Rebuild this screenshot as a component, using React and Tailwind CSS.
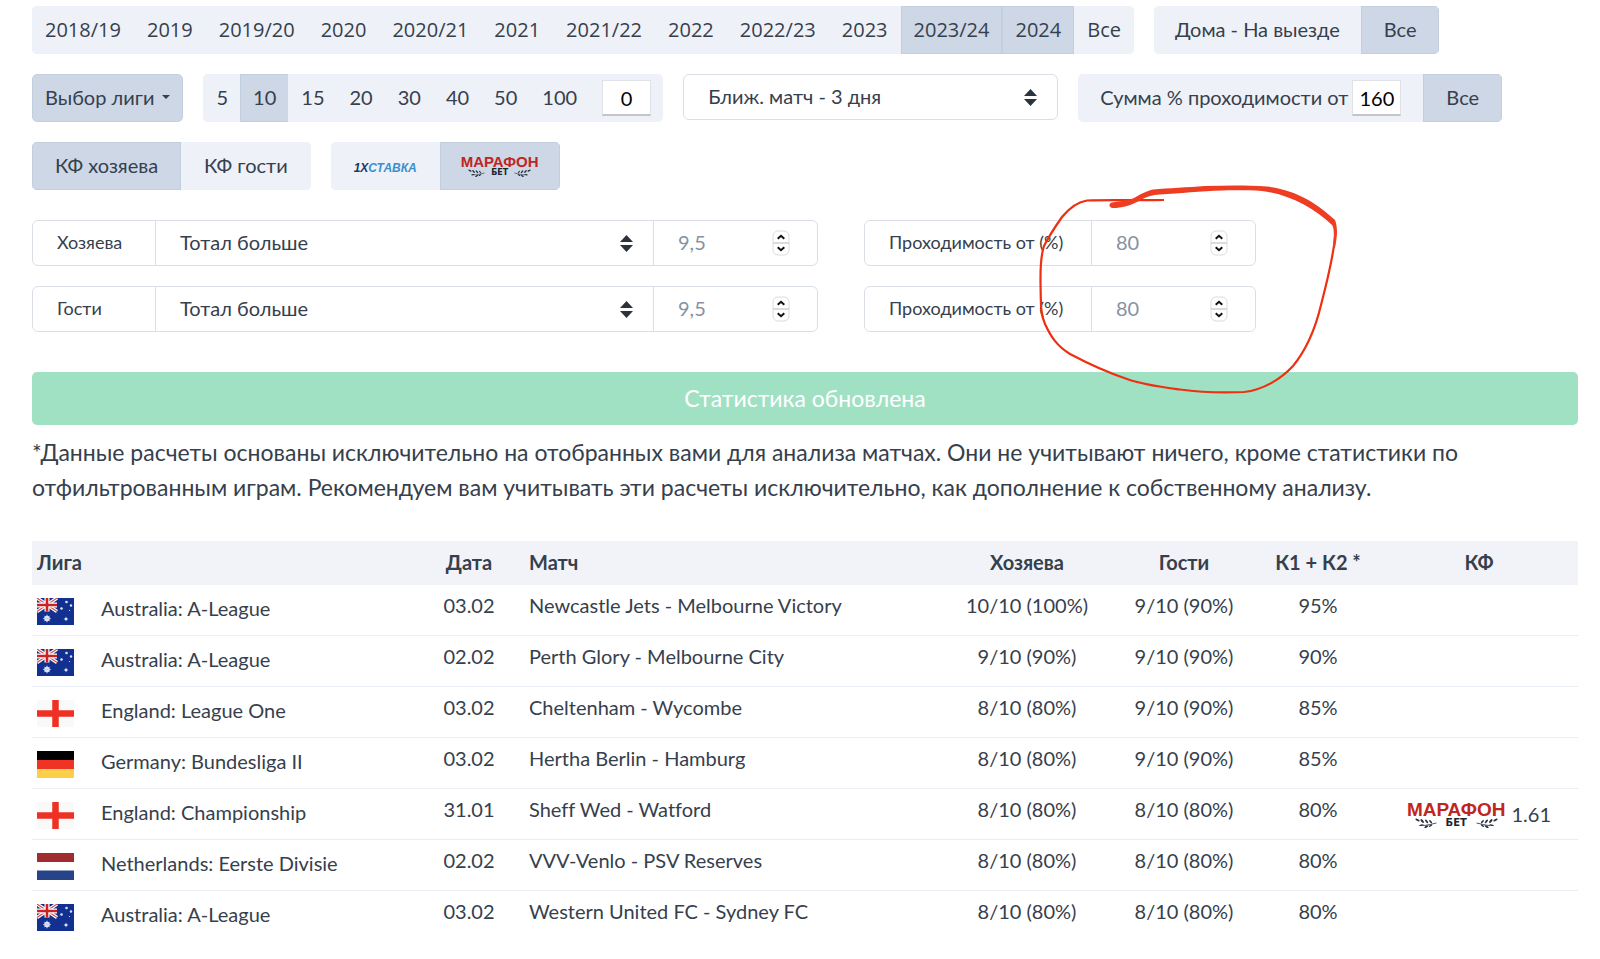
const seasons = [
  '2018/19', '2019', '2019/20', '2020', '2020/21', '2021', '2021/22',
  '2022', '2022/23', '2023', '2023/24', '2024', 'Все',
];
const activeSeasons = ['2023/24', '2024'];
const matchCounts = ['5', '10', '15', '20', '30', '40', '50', '100'];

const matches = [
  { flag: 'au', league: 'Australia: A-League', date: '03.02', match: 'Newcastle Jets - Melbourne Victory', home: '10/10 (100%)', away: '9/10 (90%)', total: '95%' },
  { flag: 'au', league: 'Australia: A-League', date: '02.02', match: 'Perth Glory - Melbourne City', home: '9/10 (90%)', away: '9/10 (90%)', total: '90%' },
  { flag: 'en', league: 'England: League One', date: '03.02', match: 'Cheltenham - Wycombe', home: '8/10 (80%)', away: '9/10 (90%)', total: '85%' },
  { flag: 'de', league: 'Germany: Bundesliga II', date: '03.02', match: 'Hertha Berlin - Hamburg', home: '8/10 (80%)', away: '9/10 (90%)', total: '85%' },
  { flag: 'en', league: 'England: Championship', date: '31.01', match: 'Sheff Wed - Watford', home: '8/10 (80%)', away: '8/10 (80%)', total: '80%', odds: '1.61' },
  { flag: 'nl', league: 'Netherlands: Eerste Divisie', date: '02.02', match: 'VVV-Venlo - PSV Reserves', home: '8/10 (80%)', away: '8/10 (80%)', total: '80%' },
  { flag: 'au', league: 'Australia: A-League', date: '03.02', match: 'Western United FC - Sydney FC', home: '8/10 (80%)', away: '8/10 (80%)', total: '80%' },
];

function FilterButton({ active, className = 'px-3', children }) {
  return (
    <button
      type="button"
      aria-pressed={active}
      className={`flex h-12 items-center justify-center border ${
        active ? 'border-[#c3cfdf] bg-[#cdd7e6]' : 'border-[#eef1f7] bg-[#eef1f7]'
      } ${className}`}
    >
      {children}
    </button>
  );
}

function Group({ children, className = '' }) {
  return <div className={`flex overflow-hidden rounded-[5px] bg-[#eef1f7] ${className}`}>{children}</div>;
}

function SmallInput({ id, label, value }) {
  return (
    <input
      id={id}
      aria-label={label}
      defaultValue={value}
      className="h-9 w-[49px] border border-b-2 border-[#dfe3e8] border-b-[#c2c6cb] bg-white text-center text-black outline-none"
    />
  );
}

function SortArrows({ className }) {
  return (
    <svg viewBox="0 0 13 17" className={`pointer-events-none absolute h-[17px] w-[13px] ${className}`} aria-hidden="true">
      <path d="M6.5 0 13 7H0zM6.5 17 0 10h13z" fill="#2b333d" />
    </svg>
  );
}

function Spinner() {
  return (
    <svg viewBox="0 0 18 26" className="h-[26px] w-[18px] shrink-0" aria-hidden="true">
      <rect x="1" y="1" width="16" height="24" rx="5" fill="#fff" stroke="#dcdcdc" />
      <path d="M1 13h16" stroke="#cfcfcf" strokeWidth="1.5" />
      <path d="M5.7 8.7 9 5.8l3.3 2.9M5.7 17.3 9 20.2l3.3-2.9" fill="none" stroke="#111" strokeWidth="2" />
    </svg>
  );
}

function Laurel({ className = '' }) {
  return (
    <svg viewBox="0 0 22 10" className={className} aria-hidden="true">
      <path d="M8 7.5C12 7.500 16 6 21.500 5" fill="none" stroke="#27303c" strokeWidth="0.8" />
      <g fill="#27303c">
        <ellipse cx="2.5" cy="2" rx="2.3" ry="1" transform="rotate(30 2.5 2)" />
        <ellipse cx="7.2" cy="3" rx="2.4" ry="1" transform="rotate(50 7.2 3)" />
        <ellipse cx="11.6" cy="3.4" rx="2.3" ry="0.9" transform="rotate(50 11.6 3.4)" />
        <ellipse cx="15.6" cy="3.6" rx="2" ry="0.8" transform="rotate(45 15.6 3.6)" />
        <ellipse cx="6.4" cy="7.2" rx="2.3" ry="0.8" transform="rotate(-10 6.4 7.2)" />
        <ellipse cx="11.4" cy="8.6" rx="2.3" ry="0.9" transform="rotate(-30 11.4 8.6)" />
        <ellipse cx="15.6" cy="7.6" rx="2" ry="0.8" transform="rotate(-35 15.6 7.6)" />
      </g>
    </svg>
  );
}

function MarathonLogo({ small }) {
  const laurelSize = small ? 'h-2 w-[17px]' : 'h-2.5 w-[22px]';
  return (
    <span className="flex flex-col items-center font-['Liberation_Sans'] font-bold">
      <span className={`text-[#c0261f] ${small ? 'text-[15px] leading-[14px]' : 'text-[19px] leading-[17px]'}`}>МАРАФОН</span>
      <span
        className={`flex items-center font-['DejaVu_Sans'] text-[#1c2531] ${
          small ? 'gap-[6px] text-[8px] leading-[8px]' : 'gap-[9px] text-[10px] leading-[10px]'
        }`}
      >
        <Laurel className={laurelSize} />
        БЕТ
        <Laurel className={`-scale-x-100 ${laurelSize}`} />
      </span>
    </span>
  );
}

function Star({ x, y, r }) {
  return <circle cx={x} cy={y} r={r} fill="#dbe3f5" />;
}

function Flag({ code }) {
  return (
    <svg viewBox="0 0 37 27" className="h-[27px] w-[37px] shrink-0" aria-hidden="true">
      {code === 'au' && (
        <>
          <path d="M0 0h37v27H0z" fill="#12308f" />
          <path d="M0 0 20 13.5M20 0 0 13.5" stroke="#fff" strokeWidth="3.4" />
          <path d="M0 0 20 13.5M20 0 0 13.5" stroke="#d8484a" strokeWidth="1.1" />
          <path d="M0 7h20M10 0v13.5" stroke="#fff" strokeWidth="5" />
          <path d="M0 7h20M10 0v13.5" stroke="#cc2222" strokeWidth="2.6" />
          <circle cx="10" cy="20.5" r="2.7" fill="#fff" />
          <path d="M6.2 20.5h7.6M10 16.7v7.6M7.300 17.800l5.400 5.400M12.700 17.800l-5.400 5.400" stroke="#c5d0ee" />
          <path d="M26.8 21h4.400M29 18.800v4.400" stroke="#8fa2d6" />
          <Star x={29} y={21} r={1.3} />
          <Star x={24.5} y={10.5} r={1.3} />
          <Star x={29.5} y={4} r={1.3} />
          <Star x={34} y={7.5} r={1.2} />
          <Star x={32.5} y={12.5} r={0.6} />
        </>
      )}
      {code === 'en' && (
        <>
          <path d="M0 0h37v27H0z" fill="#f8f9f9" />
          <path d="M0 13.5h37M18.5 0v27" stroke="#ee3124" strokeWidth="6.5" />
        </>
      )}
      {code === 'de' && (
        <>
          <path d="M0 0h37v9H0z" fill="#000" />
          <path d="M0 9h37v9H0z" fill="#ee3424" />
          <path d="M0 18h37v9H0z" fill="#f9d048" />
        </>
      )}
      {code === 'nl' && (
        <>
          <path d="M0 0h37v9H0z" fill="#a02c30" />
          <path d="M0 9h37v9H0z" fill="#fff" />
          <path d="M0 17.5h37V27H0z" fill="#274488" />
        </>
      )}
    </svg>
  );
}

function NumberField({ id, label, placeholder }) {
  return (
    <div className="flex w-[164px] shrink-0 items-center border-l border-[#dadfe6] pr-[27px] pl-6">
      <input
        id={id}
        type="number"
        aria-label={label}
        placeholder={placeholder}
        className="w-full min-w-0 appearance-none bg-transparent pb-0.5 outline-none [appearance:textfield] placeholder:text-[#8592a3]"
      />
      <Spinner />
    </div>
  );
}

function TeamFilter({ id, label }) {
  return (
    <div className="flex gap-[46px]">
      <div className="flex h-[46px] min-w-0 flex-1 rounded-md border border-[#dadfe6] md:max-w-[786px]">
        <label htmlFor={`${id}-type`} className="flex w-[122px] shrink-0 items-center pb-0.5 pl-6 text-lg">
          {label}
        </label>
        <div className="relative min-w-0 flex-1 border-l border-[#dadfe6]">
          <select id={`${id}-type`} className="size-full appearance-none bg-transparent pr-10 pb-0.5 pl-6 outline-none">
            <option>Тотал больше</option>
          </select>
          <SortArrows className="top-[14px] right-5" />
        </div>
        <NumberField id={`${id}-total`} label={`${label}: тотал`} placeholder="9,5" />
      </div>
      <div className="flex h-[46px] shrink-0 rounded-md border border-[#dadfe6]">
        <label htmlFor={`${id}-percent`} className="flex w-[226px] items-center pb-0.5 pl-6 text-lg">
          Проходимость от (%)
        </label>
        <NumberField id={`${id}-percent`} label={`${label}: проходимость`} placeholder="80" />
      </div>
    </div>
  );
}

// Hand-drawn marker around the percent inputs
function MarkerCircle() {
  return (
    <svg viewBox="0 0 400 240" className="pointer-events-none absolute top-[170px] left-[1000px] h-[240px] w-[400px]" aria-hidden="true">
      <path
        d="M164 30C135 30.600 110 29.500 87 30.500C76 32 67 41 62 47C55 57 49 66 44 76C40 88 40.500 100 40.500 113C41 130 40 143 45 154C51 167 57 176 70 184C87 193 106 202 127 209C144 215 161 217 180 219.500C202 222.500 223 223 244 222C263 220 281 209 293 196C307 179 315 160 321 135C327 112 335 80 335.500 60"
        fill="none"
        stroke="#ee2f11"
        strokeWidth="2.200"
      />
      <path
        d="M112 32.500C109 33 108 37.500 113 38C121 38 131 35.500 139 31C146 27 152 24.800 160 24.500C180 23.500 200 21 223 20.500C243 20.300 257 20 267 21.800C292 26 315 39 332 55C334.500 58 334 66 333 78L335 78C336.500 70 338.500 59 335 50C318 34 297 20 267 16.500C245 15 225 15.500 205 16C188 17.500 168 18 153 19.500C145 21.500 140 24.500 134 28C127 31 120 31 112 32.500Z"
        fill="#ee3d22"
      />
    </svg>
  );
}

export default function App() {
  return (
    <main className="relative min-h-screen bg-white pt-1.5 pr-[22px] pl-8 font-[Lato,'Noto_Sans',sans-serif] text-xl leading-[30px] text-[#36404d] [font-variant-ligatures:none]">
      <div className="flex flex-col gap-5">
        <div className="flex flex-wrap gap-5">
          <Group className="font-['Open_Sans']">
            {seasons.map((season) => (
              <FilterButton key={season} active={activeSeasons.includes(season)}>
                {season}
              </FilterButton>
            ))}
          </Group>
          <Group>
            <FilterButton className="px-5 pb-0.5">Дома - На выезде</FilterButton>
            <FilterButton active className="px-[22px] pb-0.5">Все</FilterButton>
          </Group>
        </div>

        <div className="flex flex-wrap gap-5">
          <Group>
            <FilterButton active className="gap-2 rounded-[5px] px-3 pb-0.5">
              Выбор лиги
              <svg viewBox="0 0 8 4" className="h-1 w-2" aria-hidden="true">
                <path d="M0 0h8L4 4z" fill="#36404d" />
              </svg>
            </FilterButton>
          </Group>
          <Group className="items-center pr-3">
            {matchCounts.map((count) => (
              <FilterButton key={count} active={count === '10'} className="-ml-px px-3 pb-0.5 first:ml-0">
                {count}
              </FilterButton>
            ))}
            <div className="pl-3">
              <SmallInput id="custom-count" label="Количество матчей" value="0" />
            </div>
          </Group>
          <div className="relative h-[46px] w-[375px] rounded-md border border-[#dadfe6]">
            <select aria-label="Ближайшие матчи" className="size-full appearance-none bg-transparent pr-10 pb-0.5 pl-6 outline-none">
              <option>Ближ. матч - 3 дня</option>
            </select>
            <SortArrows className="top-[14px] right-5" />
          </div>
          <Group>
            <div className="flex items-center gap-1 px-[22px]">
              <label htmlFor="sum-percent" className="pb-0.5">Сумма % проходимости от</label>
              <SmallInput id="sum-percent" value="160" />
            </div>
            <FilterButton active className="px-[22px] pb-0.5">Все</FilterButton>
          </Group>
        </div>

        <div className="flex flex-wrap gap-5">
          <Group>
            <FilterButton active className="px-[22px] pb-0.5">КФ хозяева</FilterButton>
            <FilterButton className="px-[22px] pb-0.5">КФ гости</FilterButton>
          </Group>
          <Group>
            <FilterButton className="px-[22px] pt-1">
              <span className="font-['Liberation_Sans'] text-xs font-bold text-[#3a8fd0] italic">
                <span className="text-[#17396c]">1X</span>СТАВКА
              </span>
            </FilterButton>
            <FilterButton active className="px-5">
              <MarathonLogo small />
            </FilterButton>
          </Group>
        </div>
      </div>

      <div className="mt-[30px] flex flex-col gap-5">
        <TeamFilter id="home" label="Хозяева" />
        <TeamFilter id="away" label="Гости" />
      </div>

      <div role="status" className="mt-10 rounded-[5px] bg-[#a1e1c3] pt-[11px] pb-3 text-center text-[23px] text-white">
        Статистика обновлена
      </div>

      <p className="mt-2.5 text-[23px] leading-[35px]">
        *Данные расчеты основаны исключительно на отобранных вами для анализа матчах. Они не учитывают ничего, кроме
        статистики по отфильтрованным играм. Рекомендуем вам учитывать эти расчеты исключительно, как дополнение к
        собственному анализу.
      </p>

      <table className="mt-9 w-full table-fixed">
        <thead className="bg-[#f1f3f8]">
          <tr className="h-11">
            <th className="w-[382px] px-[5px] pb-0.5 text-left">Лига</th>
            <th className="w-[110px] pb-0.5">Дата</th>
            <th className="px-[5px] pb-0.5 text-left">Матч</th>
            <th className="w-[170px] pb-0.5">Хозяева</th>
            <th className="w-36 pb-0.5">Гости</th>
            <th className="w-[124px] pb-0.5">К1 + К2 *</th>
            <th className="w-[198px] pb-0.5">КФ</th>
          </tr>
        </thead>
        <tbody>
          {matches.map((row) => (
            <tr key={row.match} className="border-b border-[#e9edf4] align-top last:border-0">
              <td className="px-[5px] pt-2 pb-3">
                <div className="flex h-[30px] gap-[27px]">
                  <div className="pt-[5px]">
                    <Flag code={row.flag} />
                  </div>
                  {row.league}
                </div>
              </td>
              <td className="pt-[5px] text-center">{row.date}</td>
              <td className="px-[5px] pt-[5px]">{row.match}</td>
              <td className="pt-[5px] text-center">{row.home}</td>
              <td className="pt-[5px] text-center">{row.away}</td>
              <td className="pt-[5px] text-center">{row.total}</td>
              <td className="pt-2.5">
                {row.odds && (
                  <div className="flex h-[30px] items-center justify-center gap-1.5">
                    <MarathonLogo />
                    {row.odds}
                  </div>
                )}
              </td>
            </tr>
          ))}
        </tbody>
      </table>

      <MarkerCircle />
    </main>
  );
}
